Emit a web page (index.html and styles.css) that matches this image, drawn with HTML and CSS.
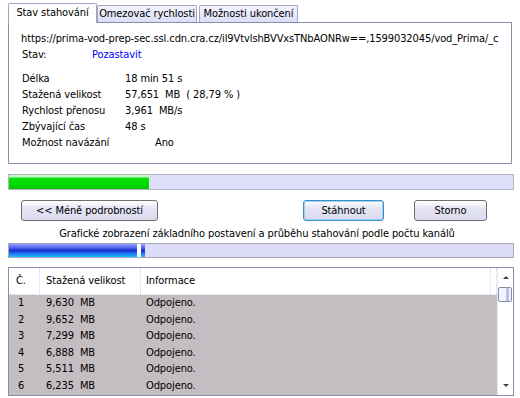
FILE: index.html
```html
<!DOCTYPE html>
<html lang="cs">
<head>
<meta charset="utf-8">
<title>Stav stahování</title>
<link rel="stylesheet" href="styles.css">
</head>
<body>
<div class="dialog">
  <div class="tabs">
    <div class="tab active">Stav stahování</div>
    <div class="tab t2">Omezovač rychlosti</div>
    <div class="tab t3">Možnosti ukončení</div>
  </div>
  <div class="panel">
    <div class="url">https://prima-vod-prep-sec.ssl.cdn.cra.cz/il9VtvlshBVVxsTNbAONRw==,1599032045/vod_Prima/_c</div>
    <div class="row status"><span class="label short">Stav:</span><span class="link">Pozastavit</span></div>
    <div class="info">
      <div class="row"><span class="label">Délka</span><span>18 min 51 s</span></div>
      <div class="row"><span class="label">Stažená velikost</span><span>57,651&nbsp; MB&nbsp; ( 28,79 % )</span></div>
      <div class="row"><span class="label">Rychlost přenosu</span><span>3,961&nbsp; MB/s</span></div>
      <div class="row"><span class="label">Zbývající čas</span><span>48 s</span></div>
      <div class="row"><span class="label">Možnost navázání</span><span class="resume">Ano</span></div>
    </div>
  </div>

  <div class="progress"><div class="fill" style="width:140px"></div></div>

  <div class="buttons">
    <button class="btn less">&lt;&lt; Méně podrobností</button>
    <button class="btn primary">Stáhnout</button>
    <button class="btn cancel">Storno</button>
  </div>

  <div class="caption">Grafické zobrazení základního postavení a průběhu stahování podle počtu kanálů</div>

  <div class="channels">
    <div class="seg" style="width:128px"></div>
    <div class="gap"></div>
    <div class="seg" style="width:4px"></div>
  </div>

  <div class="list">
    <div class="table">
      <div class="thead">
        <div class="c-num">Č.</div>
        <div class="c-size">Stažená velikost</div>
        <div class="c-info">Informace</div>
        <div class="c-rest"></div>
      </div>
      <div class="tr"><div class="c-num">1</div><div class="c-size">9,630&nbsp; MB</div><div class="c-info">Odpojeno.</div></div>
      <div class="tr"><div class="c-num">2</div><div class="c-size">9,652&nbsp; MB</div><div class="c-info">Odpojeno.</div></div>
      <div class="tr"><div class="c-num">3</div><div class="c-size">7,299&nbsp; MB</div><div class="c-info">Odpojeno.</div></div>
      <div class="tr"><div class="c-num">4</div><div class="c-size">6,888&nbsp; MB</div><div class="c-info">Odpojeno.</div></div>
      <div class="tr"><div class="c-num">5</div><div class="c-size">5,511&nbsp; MB</div><div class="c-info">Odpojeno.</div></div>
      <div class="tr"><div class="c-num">6</div><div class="c-size">6,235&nbsp; MB</div><div class="c-info">Odpojeno.</div></div>
    </div>
    <div class="scrollbar">
      <div class="arrow up"></div>
      <div class="thumb"></div>
      <div class="track"></div>
      <div class="arrow down"></div>
    </div>
  </div>
</div>
</body>
</html>
```

FILE: styles.css
```css
* { box-sizing: border-box; }

html, body {
  margin: 0;
  padding: 0;
  background: #ffffff;
}

body {
  width: 520px;
  height: 398px;
  overflow: hidden;
  font-family: "DejaVu Sans Condensed", "DejaVu Sans", sans-serif;
  font-size: 11px;
  letter-spacing: -0.1px;
  color: #000;
}

.dialog {
  display: flex;
  flex-direction: column;
}

/* Tabs */
.tabs {
  display: flex;
  align-items: flex-end;
  height: 23px;
  padding-left: 8px;
  padding-top: 3px;
  position: relative;
  z-index: 1;
  margin-bottom: -1px;
}

.tab {
  height: 17px;
  line-height: 15px;
  padding: 0;
  text-align: center;
  border: 1px solid #a4a4c4;
  border-bottom: none;
  border-radius: 2px 2px 0 0;
  background: linear-gradient(#f4f4ff, #dcdcf4);
  margin-bottom: 1px;
  white-space: nowrap;
  overflow: hidden;
}

.tab.active {
  width: 89px;
  height: 20px;
  line-height: 18px;
  background: #fff;
  margin-bottom: 0;
}

.tab.t2 { width: 100px; }
.tab.t3 { width: 99px; margin-left: 2px; }

/* Panel */
.panel {
  margin-left: 8px;
  width: 504px;
  height: 142px;
  border: 1px solid #8c8cac;
  padding: 9px 0 0 13px;
}

.url {
  height: 14px;
  line-height: 14px;
  margin-left: -1px;
  white-space: nowrap;
}

.row {
  display: flex;
  height: 16px;
  line-height: 16px;
  white-space: nowrap;
}

.row.status {
  margin-top: 1px;
}

.label {
  width: 103px;
  flex: none;
}

.label.short {
  width: 70px;
}

.link {
  color: #0000ff;
}

.info {
  margin-top: 8px;
}

.resume {
  margin-left: 30px;
}

/* Progress */
.progress {
  margin: 10px 0 0 8px;
  width: 506px;
  height: 16px;
  border: 1px solid #b4b4c0;
  background: #dedefa;
}

.progress .fill {
  height: 100%;
  background: linear-gradient(#c4f8c4 0, #c4f8c4 2px, #10e010 3px, #00d800 10px, #00c400 100%);
}

/* Buttons */
.buttons {
  display: flex;
  margin-top: 10px;
  padding-left: 21px;
  height: 21px;
}

.btn {
  font: inherit;
  letter-spacing: inherit;
  height: 21px;
  padding: 0;
  border: 1px solid #707070;
  border-radius: 3px;
  background: linear-gradient(#ffffff, #e4e4f4 40%, #dcdcf0);
  color: #000;
}

.btn.less { width: 137px; }
.btn.primary {
  width: 81px;
  margin-left: 145px;
  border-color: #3c8cc8;
  box-shadow: inset 0 0 0 1px #9cd4f4;
}
.btn.cancel { width: 73px; margin-left: 30px; }

.caption {
  margin-top: 6px;
  height: 14px;
  line-height: 14px;
  text-align: center;
  padding-right: 6px;
  white-space: nowrap;
}

/* Channels bar */
.channels {
  display: flex;
  margin: 2px 0 0 8px;
  width: 506px;
  height: 15px;
  border: 1px solid #a8a8b8;
  background: #dcdcf8;
}

.channels .seg {
  height: 100%;
  background: linear-gradient(#8c9cff 0, #5c6cf4 25%, #1830d0 50%, #1c6cf0 70%, #20c0ff 100%);
}

.channels .gap {
  width: 4px;
  background: #fff;
}

/* List */
.list {
  margin: 9px 0 0 8px;
  width: 506px;
  height: 129px;
  border: 1px solid #8c8cb4;
  display: flex;
  overflow: hidden;
}

.table {
  width: 488px;
  flex: none;
}

.thead {
  display: flex;
  height: 27px;
  line-height: 26px;
  border-bottom: 1px dotted #d0d0ec;
  background: #fff;
}

.thead > div {
  border-right: 1px dotted #d4d4ee;
}

.c-num { width: 31px; padding-left: 7px; flex: none; }
.c-size { width: 101px; padding-left: 6px; flex: none; }
.c-info { width: 350px; padding-left: 5px; flex: none; }
.c-rest { flex: 1; }

.tr {
  display: flex;
  height: 16.6px;
  line-height: 16.6px;
  background: #c4bec2;
  white-space: nowrap;
}

.tr .c-num { padding-left: 9px; }

/* Scrollbar */
.scrollbar {
  width: 16px;
  flex: none;
  display: flex;
  flex-direction: column;
  border-left: 1px dotted #d4d4ee;
  background: #fff;
}

.arrow {
  height: 19px;
  position: relative;
}

.arrow.up::after,
.arrow.down::after {
  content: "";
  position: absolute;
  left: 5px;
  border-left: 3px solid transparent;
  border-right: 3px solid transparent;
}

.arrow.up::after {
  top: 8px;
  border-bottom: 3px solid #404040;
}

.arrow.down::after {
  top: 8px;
  border-top: 3px solid #404040;
}

.thumb {
  height: 15px;
  margin-right: 1px;
  border: 1px solid #8c8c9c;
  border-radius: 2px;
  background: linear-gradient(90deg, #f4f4ff 0, #f4f4ff 60%, #b8c0f0 60%, #b8c0f0 85%, #f4f4ff 85%);
}

.track {
  flex: 1;
}
```
